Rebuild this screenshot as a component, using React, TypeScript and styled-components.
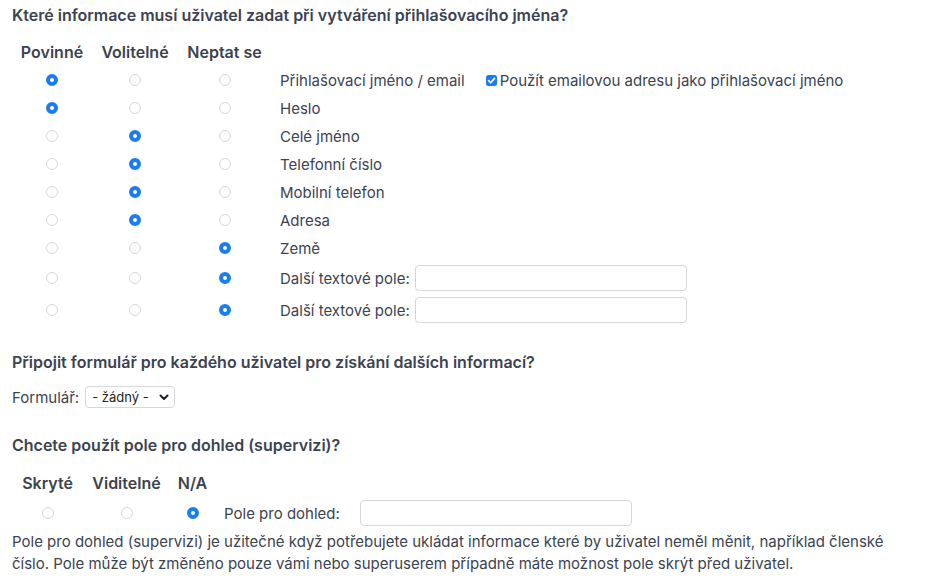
import React from 'react';
import styled, { createGlobalStyle } from 'styled-components';

const GlobalStyle = createGlobalStyle`
  html, body {
    margin: 0;
    padding: 0;
    background: #ffffff;
  }
  body {
    font-family: Inter, "Liberation Sans", Arial, sans-serif;
    font-size: 15px;
    color: #3c4350;
  }
`;

type Choice = 0 | 1 | 2;

const fields: { label: string; choice: Choice; extra?: 'email' | 'input' }[] = [
  { label: 'Přihlašovací jméno / email', choice: 0, extra: 'email' },
  { label: 'Heslo', choice: 0 },
  { label: 'Celé jméno', choice: 1 },
  { label: 'Telefonní číslo', choice: 1 },
  { label: 'Mobilní telefon', choice: 1 },
  { label: 'Adresa', choice: 1 },
  { label: 'Země', choice: 2 },
  { label: 'Další textové pole:', choice: 2, extra: 'input' },
  { label: 'Další textové pole:', choice: 2, extra: 'input' },
];

const CheckIcon = () => (
  <svg width="11" height="11" viewBox="0 0 11 11">
    <rect width="11" height="11" rx="2.5" fill="#1a7cf2" />
    <path d="M2.6 5.7 L4.6 7.7 L8.5 3.4" fill="none" stroke="#fff" strokeWidth="1.7" strokeLinecap="round" strokeLinejoin="round" />
  </svg>
);

const ChevronIcon = () => (
  <svg width="10" height="7" viewBox="0 0 10 7">
    <path d="M1.5 1.5 L5 5 L8.5 1.5" fill="none" stroke="#222" strokeWidth="2" strokeLinecap="round" strokeLinejoin="round" />
  </svg>
);

const App = () => {
  return (
    <Page>
      <GlobalStyle />
      <Question>Které informace musí uživatel zadat při vytváření přihlašovacího jména?</Question>

      <FieldGrid>
        <HeadCell>Povinné</HeadCell>
        <HeadCell>Volitelné</HeadCell>
        <HeadCell>Neptat se</HeadCell>
        <HeadCell />
        {fields.map((field, i) => (
          <React.Fragment key={i}>
            {[0, 1, 2].map((col) => (
              <RadioCell key={col} $tall={field.extra === 'input'}>
                <Radio $checked={field.choice === col} />
              </RadioCell>
            ))}
            <LabelCell $tall={field.extra === 'input'}>
              {field.label}
              {field.extra === 'email' && (
                <EmailOption>
                  <CheckIcon />
                  <span>Použít emailovou adresu jako přihlašovací jméno</span>
                </EmailOption>
              )}
              {field.extra === 'input' && <TextBox />}
            </LabelCell>
          </React.Fragment>
        ))}
      </FieldGrid>

      <Question $top={25}>Připojit formulář pro každého uživatel pro získání dalších informací?</Question>
      <FormRow>
        Formulář:
        <SelectBox>
          <span>- žádný -</span>
          <ChevronIcon />
        </SelectBox>
      </FormRow>

      <Question $top={26}>Chcete použít pole pro dohled (supervizi)?</Question>
      <SuperGrid>
        <HeadCell>Skryté</HeadCell>
        <HeadCell>Viditelné</HeadCell>
        <HeadCell>N/A</HeadCell>
        <HeadCell />
        <HeadCell />
        <RadioCell $tall>
          <Radio />
        </RadioCell>
        <RadioCell $tall>
          <Radio />
        </RadioCell>
        <RadioCell $tall>
          <Radio $checked />
        </RadioCell>
        <LabelCell $tall>Pole pro dohled:</LabelCell>
        <InputCell>
          <TextBox />
        </InputCell>
      </SuperGrid>
      <Note>
        Pole pro dohled (supervizi) je užitečné když potřebujete ukládat informace které by uživatel neměl měnit,
        například členské číslo. Pole může být změněno pouze vámi nebo superuserem případně máte možnost pole
        skrýt před uživatel.
      </Note>
    </Page>
  );
};

const Page = styled.div`
  padding: 4px 12px 0 12px;
`;

const Question = styled.div<{ $top?: number }>`
  margin-top: ${(p) => p.$top ?? 0}px;
  font-weight: 600;
  font-size: 16px;
  line-height: 22px;
`;

const FieldGrid = styled.div`
  display: grid;
  grid-template-columns: 80px 86px 93px 1fr;
  margin-top: 12px;
`;

const SuperGrid = styled.div`
  display: grid;
  grid-template-columns: 71px 87px 45px 145px 1fr;
  margin-top: 13px;
`;

const HeadCell = styled.div`
  height: 28px;
  display: flex;
  align-items: center;
  justify-content: center;
  font-weight: 600;
  font-size: 16px;
  white-space: nowrap;
`;

const RadioCell = styled.div<{ $tall?: boolean }>`
  height: ${(p) => (p.$tall ? 32 : 28)}px;
  display: flex;
  align-items: center;
  justify-content: center;
`;

const Radio = styled.span<{ $checked?: boolean }>`
  box-sizing: border-box;
  width: 12px;
  height: 12px;
  border-radius: 50%;
  background: #fff;
  border: ${(p) => (p.$checked ? '4px solid #1a7cf2' : '1px solid #d6d8dc')};
`;

const LabelCell = styled.div<{ $tall?: boolean }>`
  height: ${(p) => (p.$tall ? 32 : 28)}px;
  display: flex;
  align-items: center;
  padding-left: 9px;
  white-space: nowrap;
`;

const EmailOption = styled.label`
  display: flex;
  align-items: center;
  gap: 3px;
  margin-left: 21px;
`;

const TextBox = styled.div`
  box-sizing: border-box;
  width: 272px;
  height: 26px;
  margin-left: 5px;
  border: 1px solid #d4d7dc;
  border-radius: 4px;
  background: #fff;
`;

const InputCell = styled.div`
  display: flex;
  align-items: center;
  & > div {
    margin-left: 0;
  }
`;

const FormRow = styled.div`
  margin-top: 13px;
  display: flex;
  align-items: center;
  gap: 6px;
  height: 22px;
`;

const SelectBox = styled.div`
  box-sizing: border-box;
  width: 90px;
  height: 22px;
  display: flex;
  align-items: center;
  justify-content: space-between;
  padding: 0 5px 0 6px;
  border: 1px solid #d4d7dc;
  border-radius: 4px;
  font-size: 13px;
  color: #222;
`;

const Note = styled.div`
  margin-top: 2px;
  line-height: 22px;
`;

export default App;
